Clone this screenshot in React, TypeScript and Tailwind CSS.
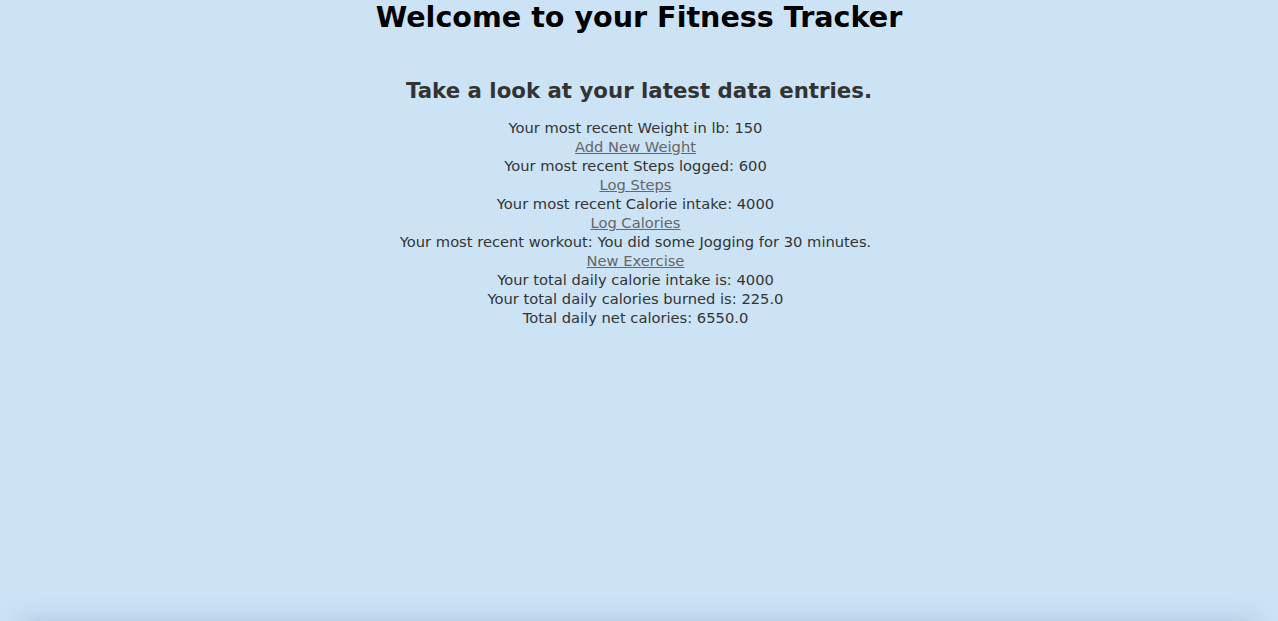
import React from 'react';

const entries: { text: string; link?: string }[] = [
    { text: 'Your most recent Weight in lb: 150', link: 'Add New Weight' },
    { text: 'Your most recent Steps logged: 600', link: 'Log Steps' },
    { text: 'Your most recent Calorie intake: 4000', link: 'Log Calories' },
    { text: 'Your most recent workout: You did some Jogging for 30 minutes.', link: 'New Exercise' },
    { text: 'Your total daily calorie intake is: 4000' },
    { text: 'Your total daily calories burned is: 225.0' },
    { text: 'Total daily net calories: 6550.0' },
];

const App: React.FC = () => {
    return (
        <div className="h-screen overflow-hidden flex flex-col bg-[#cce3f6] font-['DejaVu_Sans',Verdana,sans-serif] text-[#333]">
            <div className="h-[621px] shrink-0 text-center">
                <h1 className="text-[28.6px] leading-[34px] font-bold text-black">Welcome to your Fitness Tracker</h1>
                <h2 className="mt-[40px] text-[21.3px] leading-[34px] font-bold">Take a look at your latest data entries.</h2>
                <div className="mt-[10px] pr-[7px] text-[14.7px] leading-[19px]">
                    {entries.map((e, i) => (
                        <React.Fragment key={i}>
                            <div>{e.text}</div>
                            {e.link && (
                                <div>
                                    <a href="#" className="text-[#666] underline">{e.link}</a>
                                </div>
                            )}
                        </React.Fragment>
                    ))}
                </div>
            </div>
            <div className="mx-5 h-10 shrink-0 bg-[#cce3f6] shadow-[0_0_24px_rgba(130,160,190,0.45)]"></div>
        </div>
    );
};

export default App;
